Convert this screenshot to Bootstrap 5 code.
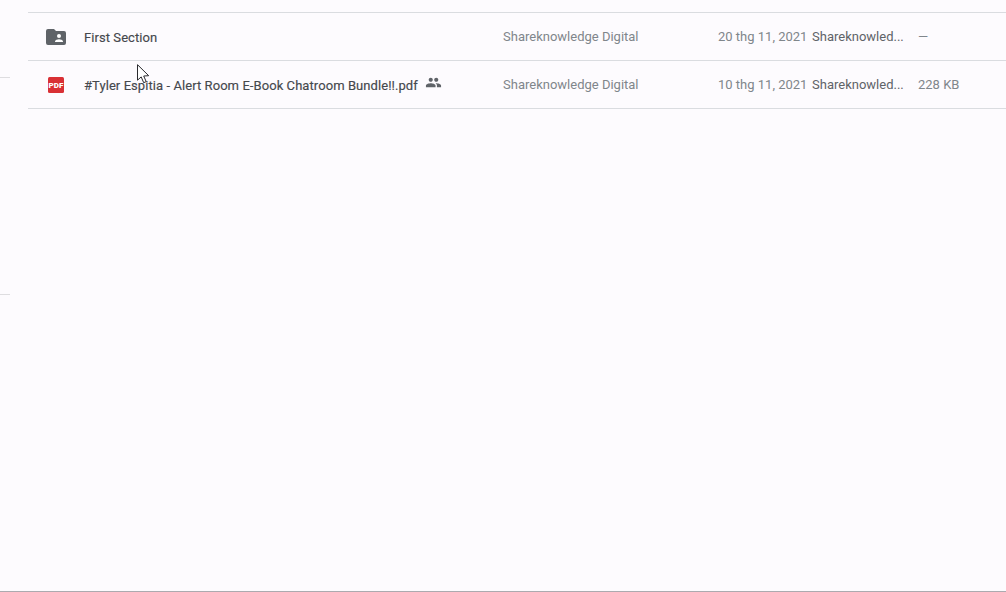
<!DOCTYPE html>
<html lang="vi">
<head>
<meta charset="utf-8">
<title>Drive</title>
<link rel="stylesheet" href="https://cdn.jsdelivr.net/npm/bootstrap@5.3.0/dist/css/bootstrap.min.css">
<style>
html,body{height:100%;}
body{background:#fdfbfe;font-family:Roboto,"Liberation Sans",sans-serif;font-size:13px;overflow:hidden;color:#5f6368;}
.frame{height:592px;border-bottom:1px solid #acaaaf;position:relative;}
.rail{width:28px;flex:none;}
.tick{width:10px;height:1px;background:#dedde0;}
.tick-a{margin-top:77px;}
.tick-b{margin-top:216px;}
.listing{padding-top:12px;padding-right:0;}
.file-row{height:48px;border-top:1px solid #dadce0;}
.file-row:last-child{border-bottom:1px solid #dadce0;height:49px;}
.cell-icon{width:56px;flex:none;padding-left:18px;}
.cell-name{width:419px;flex:none;color:#45484d;font-weight:400;letter-spacing:.07px;padding-top:2px;-webkit-text-stroke:.15px #45484d;}
.cell-owner{width:215px;flex:none;color:#80868b;}
.cell-date{width:94px;flex:none;color:#80868b;}
.cell-by{width:106px;flex:none;color:#5f6368;white-space:nowrap;}
.cell-size{flex:1;color:#80868b;}
.shared{margin-left:7px;margin-top:-6px;}
.pointer{position:absolute;left:137px;top:64px;}
</style>
</head>
<body>
<div class="frame d-flex">
  <div class="rail">
    <div class="tick tick-a"></div>
    <div class="tick tick-b"></div>
  </div>
  <div class="listing flex-grow-1">
    <div class="file-row d-flex align-items-center">
      <div class="cell-icon d-flex">
        <svg width="20" height="16" viewBox="0 0 20 16"><path fill="#5f6368" d="M2 0h6l2 2h8a2 2 0 0 1 2 2v10a2 2 0 0 1-2 2H2a2 2 0 0 1-2-2V2a2 2 0 0 1 2-2z"/><circle cx="13" cy="7" r="2" fill="#fff"/><path fill="#fff" d="M9 12.400c0-1.500 2.600-2.200 4-2.200s4 .7 4 2.200v.6H9z"/></svg>
      </div>
      <div class="cell-name">First Section</div>
      <div class="cell-owner">Shareknowledge Digital</div>
      <div class="cell-date">20 thg 11, 2021</div>
      <div class="cell-by">Shareknowled...</div>
      <div class="cell-size">—</div>
    </div>
    <div class="file-row d-flex align-items-center">
      <div class="cell-icon d-flex">
        <svg width="20" height="16" viewBox="0 0 20 16"><rect x="2" y="0" width="16" height="16" rx="1.500" fill="#d93035"/><text x="10" y="11" text-anchor="middle" font-family="Roboto,sans-serif" font-size="8" font-weight="900" fill="#fff">PDF</text></svg>
      </div>
      <div class="cell-name d-flex align-items-center">#Tyler Espitia - Alert Room E-Book Chatroom Bundle!!.pdf
        <svg class="shared" width="17" height="11" viewBox="0 0 24 16"><path fill="#5f6368" d="M16 7c1.660 0 2.990-1.340 2.990-3S17.660 1 16 1s-3 1.340-3 3 1.340 3 3 3zM8 7c1.660 0 2.990-1.340 2.990-3S9.660 1 8 1 5 2.340 5 4s1.340 3 3 3zm0 2c-2.330 0-7 1.170-7 3.500V15h14v-2.500C15 10.170 10.330 9 8 9zm8 0c-.29 0-.62.020-.97.050 1.160.84 1.970 1.970 1.970 3.450V15h6v-2.500C23 10.170 18.330 9 16 9z"/></svg>
      </div>
      <div class="cell-owner">Shareknowledge Digital</div>
      <div class="cell-date">10 thg 11, 2021</div>
      <div class="cell-by">Shareknowled...</div>
      <div class="cell-size">228 KB</div>
    </div>
  </div>
  <svg class="pointer" width="14" height="20" viewBox="0 0 14 20"><path d="M.5.700v15.500l3.700-3.300 2.500 5.800 2.500-1.100-2.500-5.600 5 -.3z" fill="#fff" stroke="#2a2a2e" stroke-width="1"/></svg>
</div>
<script src="https://cdn.jsdelivr.net/npm/bootstrap@5.3.0/dist/js/bootstrap.bundle.min.js"></script>
</body>
</html>
